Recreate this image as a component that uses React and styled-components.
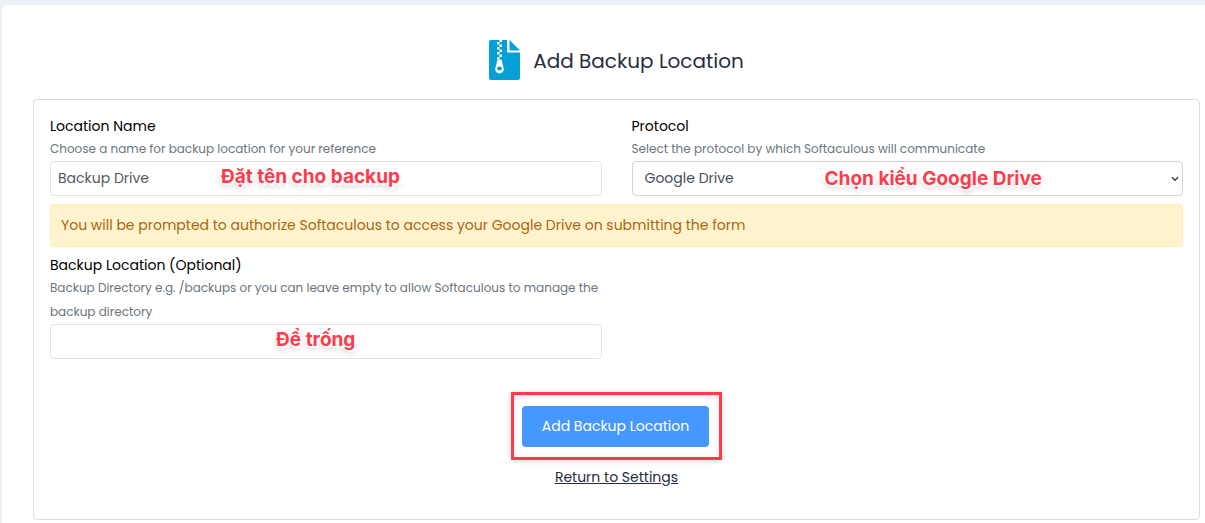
import { useState } from 'react';
import styled, { createGlobalStyle } from 'styled-components';

const App = () => {
  const [name, setName] = useState('Backup Drive');
  const [protocol, setProtocol] = useState('gdrive');
  const [location, setLocation] = useState('');

  const handleSubmit = (e) => {
    e.preventDefault();
  };

  return (
    <>
      <GlobalStyle />
      <Panel>
        <Header>
          <ArchiveIcon />
          <h1>Add Backup Location</h1>
        </Header>
        <Form onSubmit={handleSubmit}>
          <Row>
            <Field>
              <Label htmlFor='name'>Location Name</Label>
              <Hint>Choose a name for backup location for your reference</Hint>
              <Control>
                <Input id='name' type='text' value={name} onChange={(e) => setName(e.target.value)} />
                <Note $left='31%'>Đặt tên cho backup</Note>
              </Control>
            </Field>
            <Field>
              <Label htmlFor='protocol'>Protocol</Label>
              <Hint>Select the protocol by which Softaculous will communicate</Hint>
              <Control>
                <Select id='protocol' value={protocol} onChange={(e) => setProtocol(e.target.value)}>
                  <option value='gdrive'>Google Drive</option>
                  <option value='ftp'>FTP</option>
                  <option value='sftp'>SFTP</option>
                </Select>
                <Chevron viewBox='0 0 8 6' aria-hidden='true'>
                  <path d='M1 1.2 4 4.3 7 1.2' />
                </Chevron>
                <Note $left='35%' $top='6px'>
                  Chọn kiểu Google Drive
                </Note>
              </Control>
            </Field>
          </Row>
          <Alert role='alert'>
            You will be prompted to authorize Softaculous to access your Google Drive on submitting the form
          </Alert>
          <Row>
            <Field>
              <Label htmlFor='location'>Backup Location (Optional)</Label>
              <Hint>
                Backup Directory e.g. /backups or you can leave empty to allow Softaculous to manage the backup directory
              </Hint>
              <Control>
                <Input id='location' type='text' value={location} onChange={(e) => setLocation(e.target.value)} />
                <Note $left='41%'>Để trống</Note>
              </Control>
            </Field>
          </Row>
          <Actions>
            <Highlight>
              <Button type='submit'>Add Backup Location</Button>
            </Highlight>
            <ReturnLink href='#settings'>Return to Settings</ReturnLink>
          </Actions>
        </Form>
      </Panel>
    </>
  );
};

const ArchiveIcon = () => (
  <IconSvg viewBox='0 0 31 40' aria-hidden='true'>
    <path fill='#049fd4' d='M2 0H18V12.5H31V38a2 2 0 0 1-2 2H2a2 2 0 0 1-2-2V2a2 2 0 0 1 2-2Z' />
    <path fill='#049fd4' d='M20.500 0 31 10.500H20.500Z' />
    <g fill='#fff'>
      <path d='M8 2h2.500v2.500H8zM10.500 4.500h2.500V7h-2.500zM8 7h2.500v2.500H8zM10.500 9.500h2.500V12h-2.500zM8 12h2.500v2.500H8zM10.500 14.500h2.500V17h-2.500zM8 17h2.500v2.500H8zM10.500 0h2.500v2h-2.500z' />
      <path d='M8.500 19.500h4l2 8a4.300 4.300 0 1 1-8 0Z' />
    </g>
    <ellipse cx='10.500' cy='28.500' rx='2.400' ry='1.900' fill='#049fd4' />
  </IconSvg>
);

const GlobalStyle = createGlobalStyle`
  * {
    box-sizing: border-box;
  }
  body {
    margin: 0;
    background-color: #edf1f6;
    color: #282c3f;
    font-family: Poppins, Inter, 'Open Sans', sans-serif;
    font-size: 14px;
    line-height: 24px;
  }
`;

const Panel = styled.main`
  min-height: calc(100vh - 5px);
  margin: 5px 0 0 2px;
  padding: 35px 5px 3px 31px;
  background-color: #ffffff;
  border-top-left-radius: 5px;
`;

const Header = styled.header`
  display: flex;
  justify-content: center;
  align-items: center;
  gap: 13px;
  margin-bottom: 19px;
  h1 {
    margin: 0;
    padding-top: 2px;
    font-size: 20px;
    font-weight: 400;
  }
`;

const IconSvg = styled.svg`
  width: 31px;
  height: 40px;
`;

const Form = styled.form`
  padding: 15px 16px 30px;
  border: 1px solid #dddddd;
  border-radius: 4px;
`;

const Row = styled.div`
  display: grid;
  grid-template-columns: 1fr 1fr;
  column-gap: 30px;
`;

const Field = styled.div`
  display: flex;
  flex-direction: column;
`;

const Label = styled.label`
  color: #000000;
  line-height: 22px;
`;

const Hint = styled.small`
  color: #6c757d;
  font-size: 12px;
`;

const Control = styled.div`
  position: relative;
  display: flex;
`;

const Input = styled.input`
  width: 100%;
  height: 35px;
  padding: 0 7px;
  border: 1px solid #e1e3e6;
  border-radius: 4px;
  background-color: #ffffff;
  color: #55595c;
  font: inherit;
`;

const Select = styled.select`
  width: 100%;
  height: 35px;
  padding: 0 12px 2px;
  border: 1px solid #ced4da;
  border-radius: 4px;
  background-color: #ffffff;
  color: #495057;
  font: inherit;
  appearance: none;
`;

const Chevron = styled.svg`
  position: absolute;
  top: 15px;
  right: 4px;
  width: 8px;
  height: 6px;
  fill: none;
  stroke: #343a40;
  stroke-width: 1.3;
  pointer-events: none;
`;

const Note = styled.span`
  position: absolute;
  top: ${(props) => props.$top || '4px'};
  left: ${(props) => props.$left};
  color: #ff3b4b;
  font-family: Inter, sans-serif;
  font-size: 19px;
  font-weight: 700;
  white-space: nowrap;
  text-shadow: 1px 0 #ffffff, -1px 0 #ffffff, 0 1px #ffffff, 0 -1px #ffffff, 2px 2px #ffffff,
    0 4px 6px rgba(0, 0, 0, 0.2);
  pointer-events: none;
`;

const Alert = styled.div`
  margin: 8px 0 7px;
  padding: 8px 10px 9px;
  border: 1px solid #ffeeba;
  border-radius: 3px;
  background-color: #fff3cd;
  color: #a9670f;
`;

const Actions = styled.div`
  display: flex;
  flex-direction: column;
  align-items: center;
  gap: 5px;
  margin-top: 33px;
`;

const Highlight = styled.div`
  padding: 11px 10px 10px 8px;
  border: 3px solid #ff3b4b;
  box-shadow: 0 1px 5px rgba(0, 0, 0, 0.18), inset 0 1px 5px rgba(0, 0, 0, 0.12);
`;

const Button = styled.button`
  display: block;
  height: 41px;
  padding: 0 20px 2px;
  border: 0;
  border-radius: 4px;
  background-color: #4598ff;
  color: #ffffff;
  font: inherit;
  cursor: pointer;
`;

const ReturnLink = styled.a`
  color: #282c3f;
  text-decoration: underline;
`;

export default App;
